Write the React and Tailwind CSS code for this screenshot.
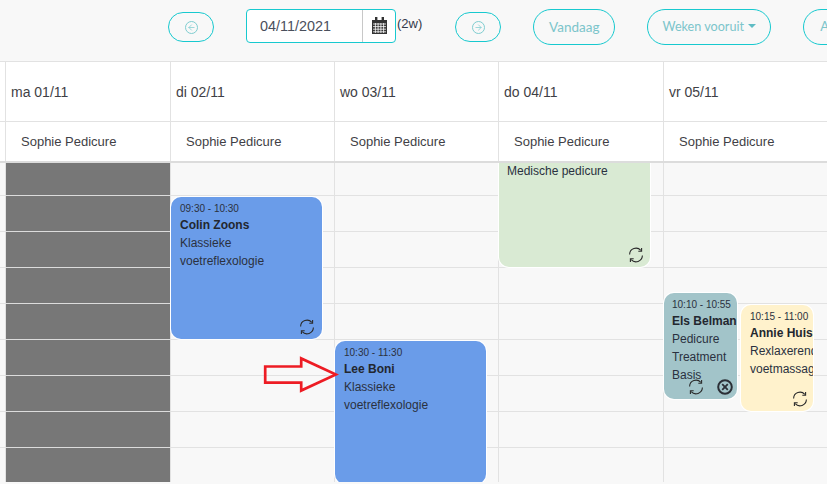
import React from "react";
import { ArrowLeft, ArrowRight } from "lucide-react";

const days = ["ma 01/11", "di 02/11", "wo 03/11", "do 04/11", "vr 05/11"];
const cols = "grid grid-cols-[5px_165px_164px_164px_165px_164px]";
const rows = [0, 1, 2, 3, 4, 5, 6, 7];

function Sync({ className = "" }) {
  return (
    <svg viewBox="0 0 16 16" fill="none" stroke="#2b2b2b" strokeWidth="1.1" className={"w-[16px] h-[16px] " + className}>
      <path d="M1.6 7.4A6.4 6.4 0 0 1 12.8 3.4" />
      <path d="M13.6 0.9v3.3h-3.3" />
      <path d="M14.4 8.6A6.4 6.4 0 0 1 3.2 12.6" />
      <path d="M2.4 15.1v-3.3h3.3" />
    </svg>
  );
}

function Calendar() {
  return (
    <svg viewBox="0 0 15 17" className="w-[15px] h-[17px]">
      <path fill="#333333" d="M0 3h15v14H0z" />
      <path fill="#333333" d="M3 0h2.4v3H3zM9.6 0h2.4v3H9.6z" />
      <path stroke="#ffffff" strokeWidth="0.8" d="M1 7h13M1 9.6h13M1 12.2h13M1 14.8h13M3.4 6v10M6.1 6v10M8.9 6v10M11.6 6v10" />
    </svg>
  );
}

function Column({ first, gray }) {
  return (
    <div className={"flex flex-col " + (first ? "" : "border-l border-[#e2e2e2]")}>
      <div className={"h-[32px] shrink-0 " + (gray ? "bg-[#777777]" : "")} />
      {rows.map((i) => (
        <div
          key={i}
          className={"h-[36px] shrink-0 border-t " + (gray ? "bg-[#777777] border-[#dcdcdc]" : "border-[#e2e2e2]")}
        />
      ))}
    </div>
  );
}

function Event({ className, pad = "pl-[9px]", time, name, lines, children }) {
  return (
    <div className={"absolute rounded-[10px] overflow-hidden text-[#2a3140] shadow-[0_0_0_1px_#ffffff] " + className}>
      <div className={"pt-[5px] " + pad}>
        <div className="text-[10px] leading-[14px] whitespace-nowrap">{time}</div>
        <div className="text-[12px] leading-[18px] font-bold whitespace-nowrap text-[#23272f]">{name}</div>
        {lines.map((l) => (
          <div key={l} className="text-[12px] leading-[18px] whitespace-nowrap">{l}</div>
        ))}
      </div>
      {children}
    </div>
  );
}

export default function App() {
  return (
    <div className="w-[827px] h-[484px] overflow-hidden bg-[#f8f8f8] font-['Liberation_Sans',sans-serif] text-[#3a3f4b]">
      <div className="h-[61px] flex items-start font-['Lato',sans-serif]">
        <div className="flex items-start pl-[168px] w-max">
          <button className="mt-[12px] w-[46px] h-[30px] rounded-full border border-[#17c9cf] flex items-center justify-center">
            <span className="w-[13px] h-[13px] rounded-full border border-[#7fcdd0] flex items-center justify-center">
              <ArrowLeft className="w-[9px] h-[9px] text-[#7fcdd0]" strokeWidth={2} />
            </span>
          </button>
          <div className="ml-[32px] mt-[9px] w-[150px] h-[34px] rounded-[4px] border border-[#17c9cf] bg-white flex font-['Liberation_Sans',sans-serif]">
            <div className="w-[116px] border-r border-[#c8c8c8] pl-[13px] text-[14.4px] leading-[32px] text-[#4a4f5c]">04/11/2021</div>
            <div className="flex-1 flex items-center justify-center pb-[1px]"><Calendar /></div>
          </div>
          <div className="ml-[1px] mt-[15px] text-[13px] leading-[18px] font-['Liberation_Sans',sans-serif] text-[#343a4a]">(2w)</div>
          <button className="ml-[33px] mt-[12px] w-[46px] h-[30px] rounded-full border border-[#17c9cf] flex items-center justify-center">
            <span className="w-[13px] h-[13px] rounded-full border border-[#7fcdd0] flex items-center justify-center">
              <ArrowRight className="w-[9px] h-[9px] text-[#7fcdd0]" strokeWidth={2} />
            </span>
          </button>
          <button className="ml-[32px] mt-[9px] w-[82px] h-[36px] rounded-full border border-[#17c9cf] text-[13.5px] text-[#7cc5cb] flex items-center justify-center">Vandaag</button>
          <button className="ml-[32px] mt-[9px] w-[124px] h-[36px] rounded-full border border-[#17c9cf] text-[12.6px] text-[#7cc5cb] flex items-center justify-center">
            Weken vooruit
            <span className="ml-[4px] mb-[2px] w-0 h-0 border-x-[4px] border-x-transparent border-t-[4px] border-t-[#5fbcc4]" />
          </button>
          <button className="ml-[32px] mt-[9px] w-[60px] h-[36px] rounded-full border border-[#17c9cf] text-[13px] text-[#7cc5cb] text-left pl-[16px] shrink-0">Ac</button>
        </div>
      </div>

      <div className="border-t border-[#e2e2e2] bg-white">
        <div className={cols + " h-[59px]"}>
          <div />
          {days.map((d) => (
            <div key={d} className="border-l border-[#e2e2e2] pl-[5px] text-[14px] leading-[60px] text-[#3f3f46]">{d}</div>
          ))}
          <div />
        </div>
        <div className={cols + " h-[40px] border-t border-[#e2e2e2]"}>
          <div />
          {days.map((d) => (
            <div key={d} className="border-l border-[#e2e2e2] pl-[15px] text-[13px] leading-[39px] text-[#3f3f46]">Sophie Pedicure</div>
          ))}
          <div />
        </div>
      </div>

      <div className={"relative h-[321px] overflow-hidden border-t-2 border-[#dcdcdc] " + cols}>
        <Column first />
        <Column gray />
        <Column />
        <Column />
        <Column />
        <Column />

        <Event className="left-[171px] top-[34px] w-[151px] h-[142px] bg-[#6a9ce9]" time="09:30 - 10:30" name="Colin Zoons" lines={["Klassieke", "voetreflexologie"]}>
          <Sync className="absolute right-[7px] bottom-[4px]" />
        </Event>
        <Event className="left-[335px] top-[178px] w-[151px] h-[143px] bg-[#6a9ce9]" time="10:30 - 11:30" name="Lee Boni" lines={["Klassieke", "voetreflexologie"]} />
        <div className="absolute left-[499px] top-0 w-[151px] h-[104px] rounded-b-[10px] bg-[#d9ead3] overflow-hidden pl-[8px] text-[12px] leading-[16px] text-[#2a3140] shadow-[0_0_0_1px_#ffffff]">
          Medische pedicure
          <Sync className="absolute right-[6px] bottom-[4px]" />
        </div>
        <Event className="left-[664px] top-[130px] w-[73px] h-[106px] bg-[#a2c4c9]" pad="pl-[8px]" time="10:10 - 10:55" name="Els Belman" lines={["Pedicure", "Treatment", "Basis"]}>
          <Sync className="absolute left-[24px] bottom-[4px]" />
          <svg viewBox="0 0 16 16" className="absolute left-[53px] bottom-[4px] w-[16px] h-[16px]" fill="none" stroke="#2b2f36">
            <circle cx="8" cy="8" r="6.8" strokeWidth="2" />
            <path d="M5.2 5.2l5.6 5.6M10.8 5.2l-5.6 5.6" strokeWidth="1.8" />
          </svg>
        </Event>
        <Event className="left-[741px] top-[142px] w-[72px] h-[106px] bg-[#fff2cc]" time="10:15 - 11:00" name="Annie Huisman" lines={["Rexlaxerende", "voetmassage"]}>
          <Sync className="absolute right-[5px] bottom-[4px]" />
        </Event>

        <svg viewBox="0 0 76 37" className="absolute left-[263px] top-[193px] w-[76px] h-[37px]" fill="none" stroke="#ed1c24" strokeWidth="2.7">
          <path d="M2.2 10.5h36V2.4L73 18.5 38.2 34.6v-8H2.2z" />
        </svg>
      </div>
    </div>
  );
}
